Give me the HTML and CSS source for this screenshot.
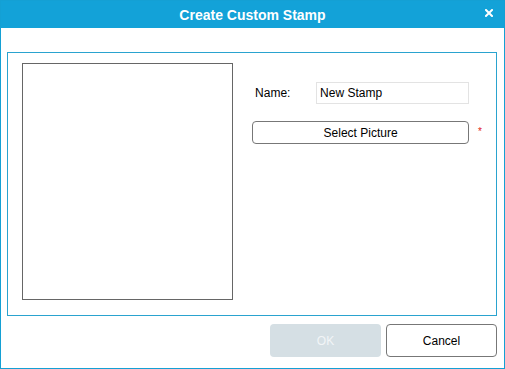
FILE: index.html
```html
<!DOCTYPE html>
<html lang="en">
<head>
    <meta charset="UTF-8">
    <title>Create Custom Stamp</title>
    <link rel="stylesheet" href="styles.css">
</head>
<body>
<div class="window">
    <div class="title-bar">
        <span></span>
        <span class="title">Create Custom Stamp</span>
        <button class="close-button" title="Close">
            <svg width="8" height="8" viewBox="0 0 8 8">
                <path d="M1 1 L7 7 M7 1 L1 7" stroke="#fff" stroke-width="2" stroke-linecap="square"/>
            </svg>
        </button>
    </div>
    <div class="content">
        <div class="panel">
            <div class="picture-box"></div>
            <div class="form">
                <div class="form-row">
                    <label for="stamp-name">Name:</label>
                    <input type="text" id="stamp-name" class="input-field" value="New Stamp">
                </div>
                <div class="form-row">
                    <button class="select-button">Select Picture</button>
                    <span class="required">*</span>
                </div>
            </div>
        </div>
        <div class="footer">
            <button class="ok-button" disabled>OK</button>
            <button class="cancel-button">Cancel</button>
        </div>
    </div>
</div>
</body>
</html>
```

FILE: styles.css
```css
/* General styles */
body {
    margin: 0;
    padding: 0;
    font-family: 'Liberation Sans', Arial, sans-serif;
    font-size: 12px;
    color: #000;
    background-color: #fff;
}

/* Window frame */
.window {
    width: 505px;
    height: 369px;
    box-sizing: border-box;
    border: 1px solid #14a0d4;
    display: flex;
    flex-direction: column;
    background-color: #fff;
}

.title-bar {
    height: 27px;
    background-color: #13a2d8;
    color: #fff;
    display: grid;
    grid-template-columns: 1fr auto 1fr;
    align-items: center;
}

.title {
    font-size: 14px;
    font-weight: bold;
}

.close-button {
    justify-self: end;
    margin-right: 11px;
    margin-top: -4px;
    padding: 0;
    border: none;
    background: none;
    display: flex;
    cursor: pointer;
}

.content {
    padding: 24px 7px 0 6px;
}

/* Main panel */
.panel {
    height: 264px;
    box-sizing: border-box;
    border: 1px solid #2aa3cf;
    padding: 10px 14px;
    display: flex;
}

.picture-box {
    width: 213px;
    height: 237px;
    box-sizing: border-box;
    border: 1px solid #666;
}

.form {
    margin-left: 19px;
    padding-top: 19px;
    display: flex;
    flex-direction: column;
    gap: 17px;
}

.form-row {
    display: flex;
    align-items: center;
}

.form-row label {
    width: 64px;
    padding-left: 3px;
    box-sizing: border-box;
}

.input-field {
    width: 153px;
    height: 22px;
    box-sizing: border-box;
    border: 1px solid #e3e3e3;
    padding: 0 3px;
    font-family: inherit;
    font-size: 12px;
    outline: none;
}

.select-button {
    width: 217px;
    height: 23px;
    border: 1px solid #777;
    border-radius: 4px;
    background-color: #fff;
    font-family: inherit;
    font-size: 12px;
    color: #000;
    cursor: pointer;
}

.required {
    color: #e02020;
    font-size: 10px;
    margin-left: 9px;
    margin-top: -2px;
}

/* Footer buttons */
.footer {
    display: flex;
    justify-content: flex-end;
    gap: 5px;
    margin-top: 8px;
}

.footer button {
    width: 111px;
    height: 33px;
    border-radius: 4px;
    font-family: inherit;
    font-size: 12px;
}

.ok-button {
    border: none;
    background-color: #d5dfe4;
    color: #f2f5f7;
}

.cancel-button {
    border: 1px solid #777;
    background-color: #fff;
    color: #000;
    cursor: pointer;
}
```
